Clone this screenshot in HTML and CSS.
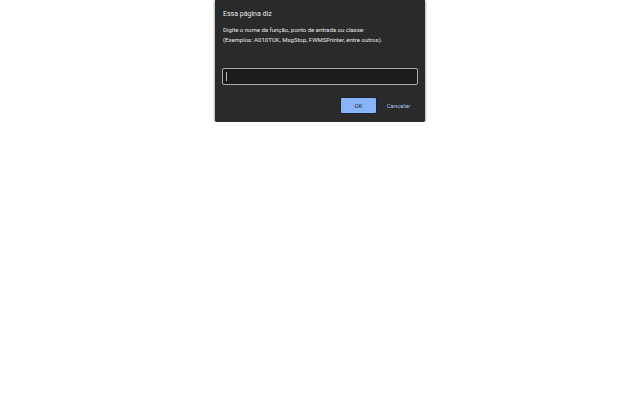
FILE: index.html
```html
<!DOCTYPE html>
<html>
    <head>
        <link rel="stylesheet" href="styles.css">
    </head>
    <body>
        <div class="dialog">
            <div class="title">Essa página diz</div>
            <div class="message">
                <div>Digite o nome da função, ponto de entrada ou classe:</div>
                <div>(Exemplos: A010TOK, MsgStop, FWMSPrinter, entre outros).</div>
            </div>
            <div class="field"><span class="caret"></span></div>
            <div class="buttons">
                <button class="ok">OK</button>
                <button class="cancel">Cancelar</button>
            </div>
        </div>
    </body>
</html>
```

FILE: styles.css
```css
body {
    margin: 0;
    background-color: #ffffff;
    font-family: "Roboto", "Liberation Sans", sans-serif;
}

.dialog {
    width: 210px;
    height: 122px;
    margin-left: 215px;
    padding: 9px 7px 0 8px;
    box-sizing: border-box;
    background-color: #2a2a2b;
    border-radius: 0 0 2px 2px;
    box-shadow: 0 1px 3px rgba(0, 0, 0, 0.6);
    color: #e8e8e8;
}

.title {
    font-size: 7px;
    line-height: 10px;
}

.message {
    margin-top: 6px;
    font-size: 6px;
    line-height: 10px;
}

.field {
    display: flex;
    align-items: center;
    height: 17px;
    margin-top: 23px;
    margin-left: -1px;
    padding-left: 3px;
    box-sizing: border-box;
    background-color: #1c1c1f;
    border: 1px solid #a9acb0;
    border-radius: 2px;
}

.caret {
    width: 1px;
    height: 9px;
    background-color: #b8b8b8;
}

.buttons {
    display: flex;
    justify-content: flex-end;
    align-items: center;
    margin-top: 12px;
}

button {
    font-family: inherit;
    font-size: 6px;
    border: none;
    padding: 0;
}

.ok {
    width: 37px;
    height: 17px;
    background-color: #8ab4f8;
    border: 1px solid #1c2430;
    color: #202124;
    border-radius: 2px;
}

.cancel {
    width: 29px;
    height: 17px;
    margin-left: 7px;
    margin-right: 5px;
    background-color: transparent;
    color: #a9c4ee;
}
```
